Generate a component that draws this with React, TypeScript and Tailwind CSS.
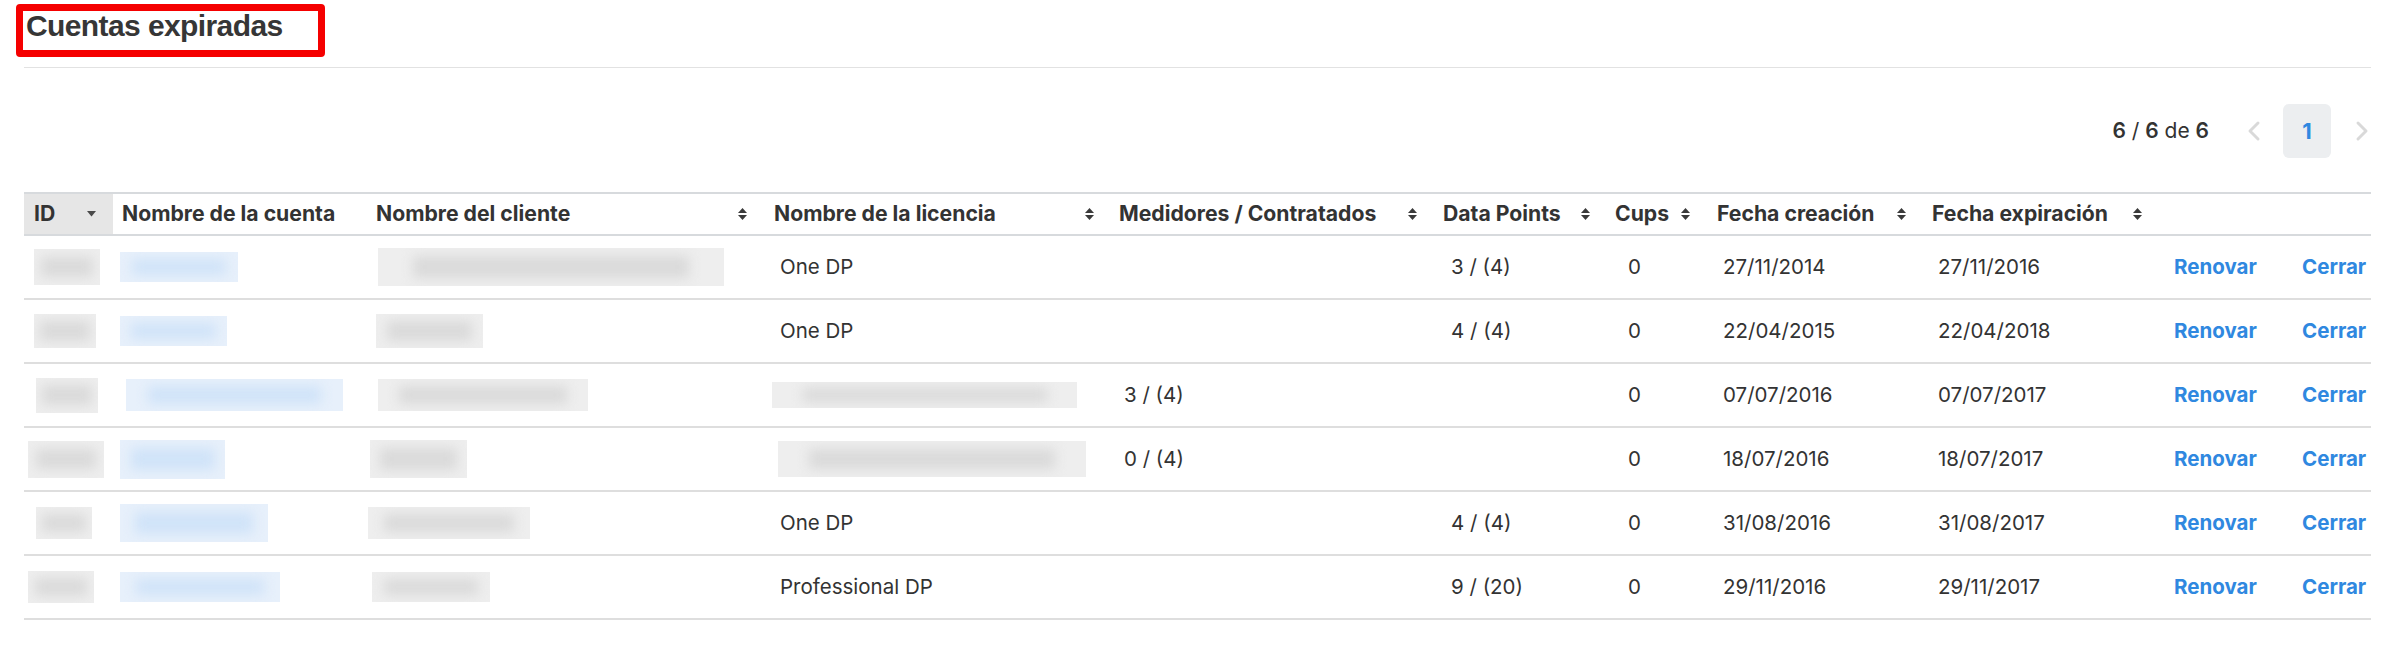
import React from 'react'

const cols =
  'grid grid-cols-[89px_253px_398px_345px_324px_173px_100px_216px_236px_132px_81px]'

type Blur = { w: number; h: number; x?: number }

type Row = {
  id: Blur
  account: Blur
  client: Blur
  license: string | Blur
  meters: string
  points: string
  cups: string
  created: string
  expires: string
}

const rows: Row[] = [
  {
    id: { w: 66, h: 36, x: 0 },
    account: { w: 118, h: 30, x: 0 },
    client: { w: 346, h: 38, x: 2 },
    license: 'One DP',
    meters: '',
    points: '3 / (4)',
    cups: '0',
    created: '27/11/2014',
    expires: '27/11/2016',
  },
  {
    id: { w: 62, h: 34, x: 0 },
    account: { w: 107, h: 30, x: 0 },
    client: { w: 107, h: 34, x: 0 },
    license: 'One DP',
    meters: '',
    points: '4 / (4)',
    cups: '0',
    created: '22/04/2015',
    expires: '22/04/2018',
  },
  {
    id: { w: 62, h: 35, x: 2 },
    account: { w: 217, h: 32, x: 6 },
    client: { w: 210, h: 32, x: 2 },
    license: { w: 305, h: 26, x: 4 },
    meters: '3 / (4)',
    points: '',
    cups: '0',
    created: '07/07/2016',
    expires: '07/07/2017',
  },
  {
    id: { w: 76, h: 37, x: -6 },
    account: { w: 105, h: 39, x: 0 },
    client: { w: 97, h: 38, x: -6 },
    license: { w: 308, h: 36, x: 10 },
    meters: '0 / (4)',
    points: '',
    cups: '0',
    created: '18/07/2016',
    expires: '18/07/2017',
  },
  {
    id: { w: 56, h: 32, x: 2 },
    account: { w: 148, h: 38, x: 0 },
    client: { w: 162, h: 32, x: -8 },
    license: 'One DP',
    meters: '',
    points: '4 / (4)',
    cups: '0',
    created: '31/08/2016',
    expires: '31/08/2017',
  },
  {
    id: { w: 66, h: 32, x: -6 },
    account: { w: 160, h: 30, x: 0 },
    client: { w: 118, h: 30, x: -4 },
    license: 'Professional DP',
    meters: '',
    points: '9 / (20)',
    cups: '0',
    created: '29/11/2016',
    expires: '29/11/2017',
  },
]

const SortIcon = () => (
  <svg width="9" height="14" viewBox="0 0 9 14" className="shrink-0 text-[#3a3a3a]">
    <path d="M0 6 L4.5 1 L9 6 Z" fill="currentColor" />
    <path d="M0 8 L4.5 13 L9 8 Z" fill="currentColor" />
  </svg>
)

const Smudge = ({ b, blue }: { b: Blur; blue?: boolean }) => (
  <div
    className={'relative overflow-hidden ' + (blue ? 'bg-[#e7f0fb]' : 'bg-[#eeeeee]')}
    style={{ width: b.w, height: b.h, marginLeft: b.x || 0 }}
  >
    <div
      className={
        'absolute inset-x-[10%] inset-y-[22%] blur-[6px] ' + (blue ? 'bg-[#d0e3f8]' : 'bg-[#dadada]')
      }
    />
  </div>
)

const Chevron = ({ right }: { right?: boolean }) => (
  <svg width="14" height="22" viewBox="0 0 14 22" fill="none">
    <polyline
      points={right ? '3,3 11,11 3,19' : '11,3 3,11 11,19'}
      stroke="#d9d9d9"
      strokeWidth="3"
      strokeLinecap="round"
      strokeLinejoin="round"
    />
  </svg>
)

export default function App() {
  return (
    <div className="min-h-screen bg-white px-6 pt-1 font-['Inter',sans-serif] text-[#333]">
      <div className="-ml-2 w-[309px] rounded-[4px] border-[7px] border-[#f50000] pb-[9px] pl-[3px]">
        <h1 className="font-['Liberation_Sans',Arial,sans-serif] text-[30px] leading-[30px] font-bold tracking-[-0.6px] text-[#363636]">
          Cuentas expiradas
        </h1>
      </div>
      <div className="mt-[10px] h-px bg-[#e2e2e2]" />

      <div className="mt-[36px] flex items-center justify-end">
        <span className="text-[21px]">
          <b className="font-semibold">6</b> / <b className="font-semibold">6</b> de{' '}
          <b className="font-semibold">6</b>
        </span>
        <span className="ml-[38px] flex">
          <Chevron />
        </span>
        <span className="ml-[22px] flex h-[54px] w-[48px] items-center justify-center rounded-md bg-[#eceef0] text-[22px] font-bold text-[#2f88e0]">
          1
        </span>
        <span className="mr-[2px] ml-[24px] flex">
          <Chevron right />
        </span>
      </div>

      <div className="mt-[34px] text-[20.5px]">
        <div className={cols + ' h-[44px] border-y-2 border-[#d7dadd] text-[21.2px] font-bold'}>
          <div className="flex items-center justify-between bg-[#e6e6e6] pr-[17px] pl-[10px]">
            <span>ID</span>
            <svg width="9" height="6" viewBox="0 0 9 6">
              <path d="M0 0 L9 0 L4.5 5.5 Z" fill="#4a4a4a" />
            </svg>
          </div>
          <div className="flex items-center pl-[9px]">Nombre de la cuenta</div>
          <div className="flex items-center justify-between pr-[17px] pl-[10px]">
            <span>Nombre del cliente</span>
            <SortIcon />
          </div>
          <div className="flex items-center justify-between pr-[15px] pl-[10px]">
            <span>Nombre de la licencia</span>
            <SortIcon />
          </div>
          <div className="flex items-center justify-between pr-[16px] pl-[10px]">
            <span>Medidores / Contratados</span>
            <SortIcon />
          </div>
          <div className="flex items-center justify-between pr-[16px] pl-[10px]">
            <span>Data Points</span>
            <SortIcon />
          </div>
          <div className="flex items-center justify-between pr-[16px] pl-[9px]">
            <span>Cups</span>
            <SortIcon />
          </div>
          <div className="flex items-center justify-between pr-[16px] pl-[11px]">
            <span>Fecha creación</span>
            <SortIcon />
          </div>
          <div className="flex items-center justify-between pr-[16px] pl-[10px]">
            <span>Fecha expiración</span>
            <SortIcon />
          </div>
          <div />
          <div />
        </div>

        {rows.map((r, i) => (
          <div key={i} className={cols + ' h-16 border-b-2 border-[#dedede]'}>
            <div className="flex items-center pl-[10px]">
              <Smudge b={r.id} />
            </div>
            <div className="flex items-center pl-[7px]">
              <Smudge b={r.account} blue />
            </div>
            <div className="flex items-center pl-[10px]">
              <Smudge b={r.client} />
            </div>
            <div className="flex items-center pl-4">
              {typeof r.license === 'string' ? (
                r.license
              ) : (
                <Smudge b={{ ...r.license, x: (r.license.x || 0) - 12 }} />
              )}
            </div>
            <div className="flex items-center pl-[15px]">{r.meters}</div>
            <div className="flex items-center pl-[18px]">{r.points}</div>
            <div className="flex items-center pl-[22px]">{r.cups}</div>
            <div className="flex items-center pl-[17px]">{r.created}</div>
            <div className="flex items-center pl-4">{r.expires}</div>
            <div className="flex items-center pl-4 font-bold text-[#2f88e0]">Renovar</div>
            <div className="flex items-center pl-3 font-bold text-[#2f88e0]">Cerrar</div>
          </div>
        ))}
      </div>
    </div>
  )
}
